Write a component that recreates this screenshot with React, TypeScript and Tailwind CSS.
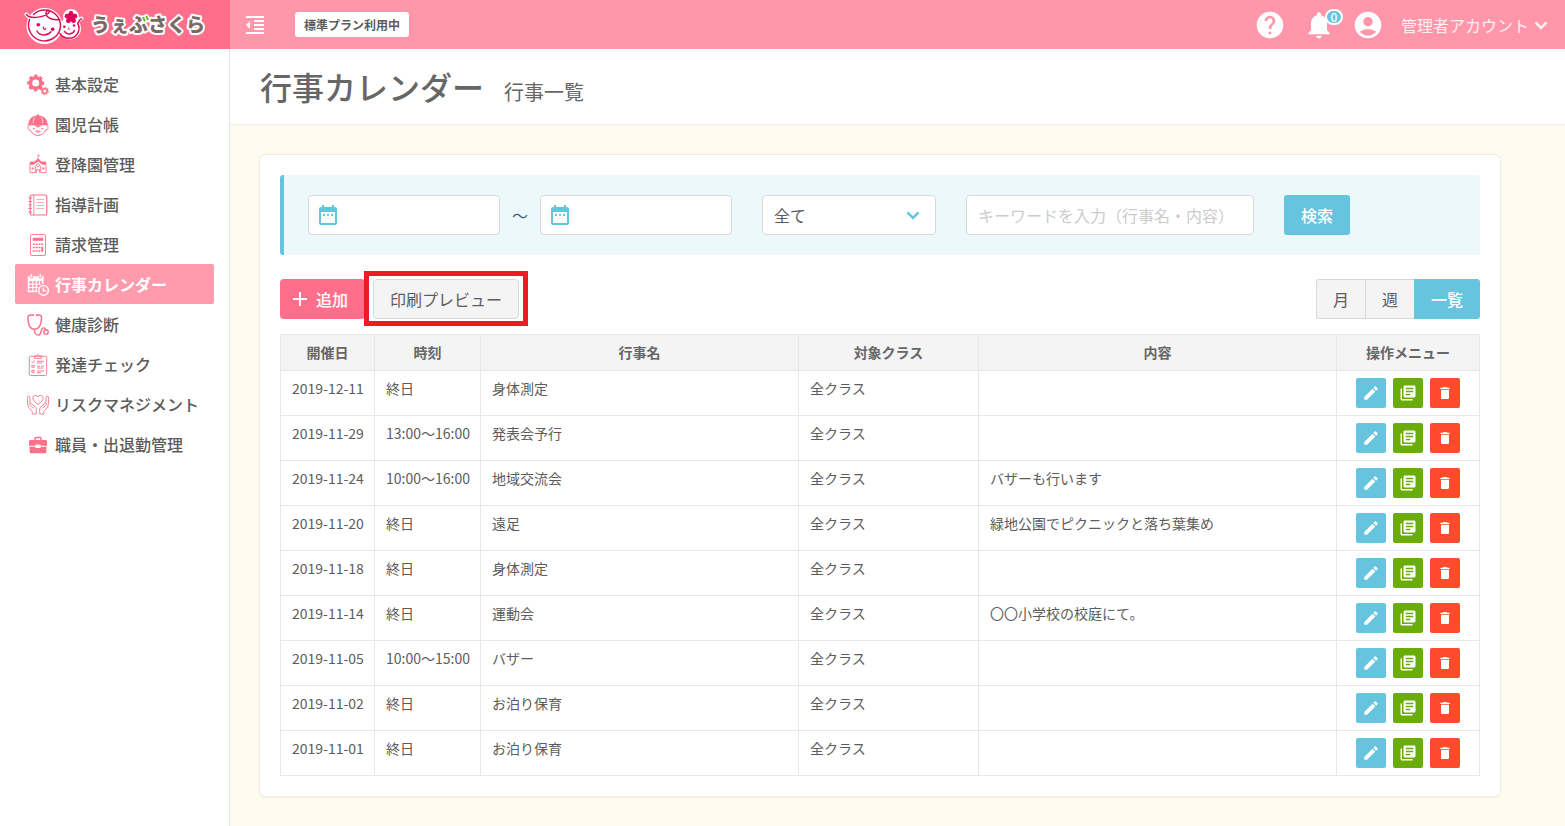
import type { ReactNode } from "react";
import {
  MdAccountCircle,
  MdAdd,
  MdDateRange,
  MdDelete,
  MdEdit,
  MdFormatIndentDecrease,
  MdHelp,
  MdLibraryBooks,
  MdNotifications,
} from "react-icons/md";

const GearsIcon = () => (
  <>
    <circle cx="8.7" cy="9" r="5.3" fill="none" stroke="currentColor" strokeWidth="3.6" />
    <circle
      cx="8.7"
      cy="9"
      r="7.4"
      fill="none"
      stroke="currentColor"
      strokeWidth="2.2"
      pathLength="16"
      strokeDasharray="1.1 0.9"
      strokeDashoffset="0.5"
    />
    <circle cx="17.8" cy="17" r="2.3" fill="none" stroke="currentColor" strokeWidth="1.6" />
    <circle
      cx="17.8"
      cy="17"
      r="3.4"
      fill="none"
      stroke="currentColor"
      strokeWidth="1.4"
      pathLength="16"
      strokeDasharray="1.1 0.9"
    />
  </>
);

const ChildIcon = () => (
  <>
    <path d="M1.600 9.400C1.800 4.600 5.600 1.700 10 1.400V.4h2v1c4.400.3 8.200 3.200 8.400 8l1.500 1.900H.1z" fill="currentColor" />
    <path d="M8 3.200C6.600 5 6.200 7 6.200 9.300M14 3.200c1.400 1.800 1.800 3.800 1.800 6.100" fill="none" stroke="#fff" strokeWidth=".7" />
    <path
      d="M2.600 11.800c-2.400.2-2.400 4 .6 4.400 1.600 3.200 4.500 5.200 7.800 5.200s6.200-2 7.800-5.200c3-.4 3-4.200.6-4.400"
      fill="none"
      stroke="currentColor"
      strokeWidth="1"
    />
    <path d="M6.800 11.200h8.400l-2.600 1.500h-.7L11 14.200l-.9-1.500h-.7z" fill="currentColor" />
    <circle cx="6.800" cy="14.600" r=".9" fill="currentColor" />
    <circle cx="15.200" cy="14.600" r=".9" fill="currentColor" />
    <path d="M8.600 17h4.800c-.6 1.800-4.200 1.800-4.800 0z" fill="none" stroke="currentColor" strokeWidth=".9" />
  </>
);

const SchoolIcon = () => (
  <>
    <path d="M10.600 5V.4L13 1.500l-1.700.9V5z" fill="currentColor" />
    <path d="M11 4.200l3.400 3.200h4.200l1.400 3.400h-4.700L11 7.600l-4.300 3.200H2l1.400-3.400h4.200z" fill="currentColor" />
    <path d="M3 11.300v7.300h5.300v-6.800M19 11.300v7.300h-5.300v-6.800" fill="none" stroke="currentColor" strokeWidth=".9" />
    <circle cx="11" cy="11.200" r="1.500" fill="none" stroke="currentColor" strokeWidth=".9" />
    <path d="M9.500 18.700v-3h3v3" fill="none" stroke="currentColor" strokeWidth=".9" />
    <path d="M4.600 13.600h2v2h-2zM15.400 13.600h2v2h-2z" fill="currentColor" />
  </>
);

const NotebookIcon = () => (
  <>
    <rect x="3.200" y="1" width="16.600" height="20" rx="1.600" fill="none" stroke="currentColor" strokeWidth="1.200" />
    <path d="M6.800 1v20" stroke="currentColor" strokeWidth=".8" />
    <path d="M1.600 4h3.400M1.600 7.500h3.400M1.600 11h3.400M1.600 14.500h3.400M1.600 18h3.400" stroke="currentColor" strokeWidth="1.200" />
    <path d="M9.500 5.500h7.500M9.500 8.500h7.500M9.500 11.500h7.500M9.500 14.500h7.500" stroke="currentColor" strokeWidth=".6" />
  </>
);

const CalculatorIcon = () => (
  <>
    <rect x="3.500" y=".5" width="15" height="21" rx="1.400" fill="none" stroke="currentColor" strokeWidth=".9" />
    <path d="M5.800 3.800h10.400v3H5.800z" fill="currentColor" />
    <path
      d="M5.800 9.500h2v1.500h-2zM8.600 9.500h2v1.500h-2zM11.400 9.500h2v1.500h-2zM14.200 9.500h2v1.500h-2zM5.800 12.800h2v1.500h-2zM8.600 12.800h2v1.500h-2zM11.400 12.800h2v1.500h-2zM14.200 12.800h2v5h-2zM5.800 16.300h2v1.500h-2zM8.600 16.300h2v1.500h-2zM11.400 16.300h2v1.500h-2z"
      fill="currentColor"
    />
  </>
);

const CalendarIcon = () => (
  <>
    <path d="M.8 2.200h2v2h3v-2h6v2h3v-2h1.800v7.600H15V7H2.300v9.800h8v1.400H.8z" fill="currentColor" />
    <path d="M4.300 0v3.200M13.300 0v3.200" stroke="currentColor" strokeWidth="1.500" />
    <path d="M2 10.200h11.500M2 13.500h9M5.800 7v10M9.300 7v10M12.600 7v4" stroke="currentColor" strokeWidth="1.100" />
    <circle cx="16.500" cy="16.400" r="4.800" fill="#ff9bad" stroke="currentColor" strokeWidth="1.500" />
    <path d="M16.300 13.400v3.400h2.800" fill="none" stroke="currentColor" strokeWidth="1.300" />
  </>
);

const StethoscopeIcon = () => (
  <g fill="none" stroke="currentColor">
    <path
      d="M5.800 1H3.600C1.800 1 .9 2.200.9 4c0 5.400 1.500 11.200 6.500 11.200S14.600 9.400 14.600 4c0-1.800-.9-3-2.700-3H10"
      strokeWidth="1.500"
    />
    <path d="M6.200 0v2.200M9.600 0v2.200" strokeWidth="1.300" />
    <path d="M7.500 15.200c-.4 3.600 1.200 5.900 3.600 5.900 4.300 0 1.800-7.200 5.400-7.200 2 0 2 1.700 2 1.700" strokeWidth="1.400" />
    <circle cx="19" cy="17.900" r="2.200" strokeWidth="1.400" />
  </g>
);

const ClipboardIcon = () => (
  <g fill="none" stroke="currentColor" strokeWidth=".9">
    <rect x="2.300" y="2.300" width="17.400" height="19.200" rx="1.200" />
    <path d="M7.600 4.400V1.900h2c.3-1.700 2.500-1.700 2.800 0h2v2.500z" />
    <path d="M4.800 7.600l1 1.200 1.600-2.400M4.800 11.300h2.400v2H4.800zM4.800 16.300h2.400v2H4.800z" />
    <path d="M10 7.300h7M10 9h5M10 12.200h3M14 12.200h3M10 14h6M10 17h7M10 18.700h4" />
  </g>
);

const CareIcon = () => (
  <g fill="none" stroke="currentColor" strokeWidth=".9" strokeLinejoin="round">
    <path d="M11 10.500C8.600 8.500 5.900 6.600 5.900 4.100c0-3 3.800-3.700 5.100-1.200 1.300-2.500 5.100-1.800 5.100 1.200 0 2.500-2.700 4.400-5.100 6.400z" />
    <path d="M5.200 20v-2.500L1.500 13.300C.3 11.500.4 5.500.5 3.200c.2-1.400 2.300-1.400 2.400 0l.2 5.600 5.200 4c1.100 1 1 2.300 1 7.200zM3.100 8.800c-1 .6-.6 1.800.2 2.600l3 2.800" />
    <path d="M16.800 20v-2.500l3.700-4.200c1.200-1.800 1.100-7.800 1-10.100-.2-1.400-2.300-1.400-2.400 0l-.2 5.600-5.200 4c-1.100 1-1 2.300-1 7.200zM18.900 8.800c1 .6.600 1.800-.2 2.600l-3 2.800" />
  </g>
);

const BriefcaseIcon = () => (
  <>
    <path d="M8 6V4.500c0-.6.4-1 1-1h4c.6 0 1 .4 1 1V6" fill="none" stroke="currentColor" strokeWidth="1.500" />
    <path d="M3.500 6h15c.8 0 1.500.6 1.500 1.400v4.300h-6.500v-1.200h-5v1.200H2V7.400C2 6.600 2.700 6 3.500 6z" fill="currentColor" />
    <path d="M2.600 12.800h5.900v1.300h5v-1.300h5.900v5c0 .9-.6 1.500-1.400 1.500H4c-.8 0-1.400-.6-1.400-1.500z" fill="currentColor" />
  </>
);

const menu: { label: string; icon: ReactNode; active?: boolean }[] = [
  { label: "基本設定", icon: <GearsIcon /> },
  { label: "園児台帳", icon: <ChildIcon /> },
  { label: "登降園管理", icon: <SchoolIcon /> },
  { label: "指導計画", icon: <NotebookIcon /> },
  { label: "請求管理", icon: <CalculatorIcon /> },
  { label: "行事カレンダー", icon: <CalendarIcon />, active: true },
  { label: "健康診断", icon: <StethoscopeIcon /> },
  { label: "発達チェック", icon: <ClipboardIcon /> },
  { label: "リスクマネジメント", icon: <CareIcon /> },
  { label: "職員・出退勤管理", icon: <BriefcaseIcon /> },
];

const events = [
  { date: "2019-12-11", time: "終日", name: "身体測定", target: "全クラス", note: "" },
  { date: "2019-11-29", time: "13:00～16:00", name: "発表会予行", target: "全クラス", note: "" },
  { date: "2019-11-24", time: "10:00～16:00", name: "地域交流会", target: "全クラス", note: "バザーも行います" },
  { date: "2019-11-20", time: "終日", name: "遠足", target: "全クラス", note: "緑地公園でピクニックと落ち葉集め" },
  { date: "2019-11-18", time: "終日", name: "身体測定", target: "全クラス", note: "" },
  { date: "2019-11-14", time: "終日", name: "運動会", target: "全クラス", note: "〇〇小学校の校庭にて。" },
  { date: "2019-11-05", time: "10:00～15:00", name: "バザー", target: "全クラス", note: "" },
  { date: "2019-11-02", time: "終日", name: "お泊り保育", target: "全クラス", note: "" },
  { date: "2019-11-01", time: "終日", name: "お泊り保育", target: "全クラス", note: "" },
];

const headings = ["開催日", "時刻", "行事名", "対象クラス", "内容", "操作メニュー"];

function Chevron() {
  return (
    <svg viewBox="0 0 24 24" className="size-6" aria-hidden="true">
      <path d="M6.500 9.300l5.500 5.500 5.500-5.500" fill="none" stroke="currentColor" strokeWidth="2.600" />
    </svg>
  );
}

function Logo() {
  return (
    <svg viewBox="0 0 184 46" className="h-[46px] w-[184px]" role="img" aria-label="うぇぶさくら">
      {/* white rim behind both faces */}
      <g fill="#fff" stroke="#fff" strokeWidth="4" strokeLinejoin="round" strokeLinecap="round">
        <circle cx="20.500" cy="24" r="16" />
        <circle cx="46" cy="26.500" r="9" />
        <circle cx="47" cy="15" r="6" />
        <path d="M2.500 12.500c2 3 6 4 9 3M50 20l7.500-3.500" fill="none" />
      </g>
      <g fill="none" stroke="#d4145a" strokeWidth="1.500" strokeLinecap="round">
        <path d="M5.500 17.500a16 16 0 1 0 31 6.500c0-8.500-6.500-16-16-16-5 0-8.500 2-11 4.500" />
        <path d="M2.500 12.500c3 4.500 16 3.500 21.500-1 2.800-2.400.4-4.500-1.200-2.300-3 4.300 3.500 9.800 13 8.300" />
        <path d="M13 29c2.500 5 10 5.500 14 .8" />
        <path d="M19.500 25c-1 2.300 1.800 3.200 2.400 1.400" strokeWidth="1.200" />
        <path d="M36 31.500c4 6.500 14 6.200 17.500.2 2.200-4 1.800-7.500.2-10.200 1-2.800 2-4.200 4-4.500" />
        <path d="M40.500 29.500c2.500 3.500 8 3.500 10-1" />
        <path d="M44.500 26c-.6 1.200.8 2 1.500.9" strokeWidth="1" />
      </g>
      <g fill="#e0005a">
        <circle cx="14.300" cy="22.700" r="1.800" />
        <circle cx="28.700" cy="27.200" r="1.800" />
        <circle cx="40.300" cy="24.800" r="1.300" />
        <circle cx="50" cy="23.500" r="1.200" />
        <circle cx="47" cy="15.300" r="4.200" />
        <circle cx="47" cy="11.400" r="2.400" />
        <circle cx="50.900" cy="14.200" r="2.400" />
        <circle cx="49.600" cy="18.700" r="2.400" />
        <circle cx="44.400" cy="18.700" r="2.400" />
        <circle cx="43.100" cy="14.200" r="2.400" />
      </g>
      <text
        x="67"
        y="30"
        className='fill-[#7a6a66] stroke-white stroke-[4px] font-["Noto_Sans_CJK_JP",sans-serif] text-[19px] font-black [paint-order:stroke_fill] [stroke-linejoin:round]'
      >
        うぇぶさくら
      </text>
      <path d="M119.500 15.800l1.300 2.700M122.500 14.600l1.300 2.700" stroke="#fff" strokeWidth="5" strokeLinecap="round" />
      <path d="M119.300 15.800l1.300 2.700M122.500 14.600l1.300 2.700" stroke="#6cb52d" strokeWidth="2" strokeLinecap="round" />
    </svg>
  );
}

function Header() {
  return (
    <header className="flex h-[49px] bg-[#ff96a9]">
      <div className="flex w-[230px] shrink-0 items-center bg-[#ff6f8b] pl-6">
        <a href="#">
          <Logo />
        </a>
      </div>
      <div className="flex flex-1 items-center pr-3 pl-[13px] text-white">
        <button type="button" aria-label="メニューを閉じる">
          <MdFormatIndentDecrease className="size-6" />
        </button>
        <span className="ml-7 rounded-[3px] bg-white px-[9px] py-[3px] text-[12px] leading-[19px] font-bold text-[#5c5c5c]">
          標準プラン利用中
        </span>
        <div className="ml-auto flex items-center gap-[17px]">
          <a href="#" aria-label="ヘルプ">
            <MdHelp className="size-8" />
          </a>
          <a href="#" aria-label="お知らせ" className="relative">
            <MdNotifications className="size-8" />
            <span className="absolute top-0 left-[22px] flex h-4 w-[18px] items-center justify-center rounded-full border-2 border-white bg-[#67c4de] text-[12px] leading-none font-medium">
              0
            </span>
          </a>
          <MdAccountCircle className="size-8" />
          <button type="button" className="flex items-center text-[16px] text-[#fff0f3]">
            管理者アカウント
            <Chevron />
          </button>
        </div>
      </div>
    </header>
  );
}

function Sidebar() {
  return (
    <nav className="w-[230px] shrink-0 border-r border-[#e8e8e8] bg-white px-[15px] pt-[15px]">
      <ul>
        {menu.map((item) => (
          <li key={item.label}>
            <a
              href="#"
              className={`flex h-10 items-center gap-[6px] rounded-[2px] pl-3 text-[16px] whitespace-nowrap ${
                item.active ? "bg-[#ff9bad] font-bold text-white" : "font-medium text-[#5c5c5c]"
              }`}
            >
              <svg
                viewBox="0 0 22 22"
                className={`mt-px size-[22px] shrink-0 ${item.active ? "text-white" : "text-[#fb7189]"}`}
                aria-hidden="true"
              >
                {item.icon}
              </svg>
              {item.label}
            </a>
          </li>
        ))}
      </ul>
    </nav>
  );
}

function DateField({ label }: { label: string }) {
  return (
    <div className="relative">
      <MdDateRange className="absolute top-2 left-2 size-6 text-[#67c4de]" />
      <input
        type="text"
        aria-label={label}
        className="block h-10 w-48 rounded-[4px] border border-[#d8d8d8] bg-white pr-3 pl-10 text-[16px]"
      />
    </div>
  );
}

function SearchForm() {
  return (
    <form className="flex items-center gap-[30px] rounded-[3px] border-l-4 border-[#67c4de] bg-[#ecf8fa] px-6 py-5">
      <div className="flex items-center">
        <DateField label="開始日" />
        <span className="w-10 text-center text-[16px] text-[#2f6478]">～</span>
        <DateField label="終了日" />
      </div>
      <div className="relative">
        <select
          aria-label="対象"
          className="block h-10 w-[174px] appearance-none rounded-[4px] border border-[#d8d8d8] bg-white px-[11px] text-[16px]"
        >
          <option>全て</option>
        </select>
        <span className="pointer-events-none absolute top-2 right-[11px] text-[#67c4de]">
          <Chevron />
        </span>
      </div>
      <input
        type="text"
        aria-label="キーワード"
        placeholder="キーワードを入力（行事名・内容）"
        className="h-10 w-72 rounded-[4px] border border-[#d8d8d8] bg-white px-[11px] text-[16px] placeholder:text-[#ccc]"
      />
      <button type="button" className="h-10 rounded-[3px] bg-[#67c4de] px-[17px] text-[16px] font-medium text-white">
        検索
      </button>
    </form>
  );
}

function Toolbar() {
  return (
    <div className="mt-6 flex text-[16px]">
      <button
        type="button"
        className="flex h-10 items-center gap-1 rounded-[4px] bg-[#ff6f8b] pr-[17px] pl-2 font-medium text-white"
      >
        <MdAdd className="size-6" />
        追加
      </button>
      <div className="relative ml-2">
        <span className="absolute -inset-x-[9px] -top-2 -bottom-[7px] border-[5px] border-[#ed1c24] bg-white" />
        <button type="button" className="relative h-10 rounded-[4px] border border-[#d8d8d8] bg-[#f4f4f4] px-4">
          印刷プレビュー
        </button>
      </div>
      <div className="ml-auto flex">
        <button type="button" className="h-10 rounded-l-[3px] border border-r-0 border-[#d8d8d8] bg-[#f4f4f4] px-4">
          月
        </button>
        <button type="button" className="h-10 border border-r-0 border-[#d8d8d8] bg-[#f4f4f4] px-4">
          週
        </button>
        <button type="button" className="h-10 rounded-r-[3px] bg-[#67c4de] px-[17px] font-medium text-white">
          一覧
        </button>
      </div>
    </div>
  );
}

function EventTable() {
  return (
    <table className="mt-[15px] w-full table-fixed border-collapse text-[14px] leading-[21px]">
      <colgroup>
        <col className="w-[94px]" />
        <col className="w-[106px]" />
        <col className="w-[318px]" />
        <col className="w-[180px]" />
        <col />
        <col className="w-[143px]" />
      </colgroup>
      <thead>
        <tr className="bg-[#f4f4f4]">
          {headings.map((heading) => (
            <th key={heading} className="border border-[#e8e8e8] py-[7px] font-bold text-[#666]">
              {heading}
            </th>
          ))}
        </tr>
      </thead>
      <tbody>
        {events.map((event) => (
          <tr key={event.date} className="align-top">
            <td className="border border-[#e8e8e8] py-[7px] pl-[11px] whitespace-nowrap">{event.date}</td>
            <td className="border border-[#e8e8e8] py-[7px] pl-[11px] whitespace-nowrap">{event.time}</td>
            <td className="border border-[#e8e8e8] px-[11px] py-[7px]">{event.name}</td>
            <td className="border border-[#e8e8e8] px-[11px] py-[7px]">{event.target}</td>
            <td className="border border-[#e8e8e8] px-[11px] py-[7px]">{event.note}</td>
            <td className="border border-[#e8e8e8] py-[7px]">
              <div className="flex justify-center gap-[7px] text-white">
                <button
                  type="button"
                  aria-label="編集"
                  className="flex size-[30px] items-center justify-center rounded-[2px] bg-[#67c4de]"
                >
                  <MdEdit className="size-[18px]" />
                </button>
                <button
                  type="button"
                  aria-label="複製"
                  className="flex size-[30px] items-center justify-center rounded-[2px] bg-[#6aad0a]"
                >
                  <MdLibraryBooks className="size-[18px]" />
                </button>
                <button
                  type="button"
                  aria-label="削除"
                  className="flex size-[30px] items-center justify-center rounded-[2px] bg-[#ff4b2d]"
                >
                  <MdDelete className="size-4" />
                </button>
              </div>
            </td>
          </tr>
        ))}
      </tbody>
    </table>
  );
}

export default function App() {
  return (
    <div className='flex min-h-screen flex-col bg-white font-["Noto_Sans_CJK_JP",sans-serif] text-[#5c5c5c]'>
      <Header />
      <div className="flex flex-1">
        <Sidebar />
        <main className="min-w-0 flex-1 bg-[#fffbee]">
          <div className="flex h-[76px] items-baseline gap-5 border-b border-[#ebebeb] bg-white px-[30px] pt-[13px] text-[#666]">
            <h1 className="text-[32px] leading-[48px] font-medium">行事カレンダー</h1>
            <p className="text-[20px]">行事一覧</p>
          </div>
          <div className="p-[29px]">
            <section className="max-w-[1242px] rounded-[6px] border border-[#efece2] bg-white p-5 shadow-xs">
              <SearchForm />
              <Toolbar />
              <EventTable />
            </section>
          </div>
        </main>
      </div>
    </div>
  );
}
